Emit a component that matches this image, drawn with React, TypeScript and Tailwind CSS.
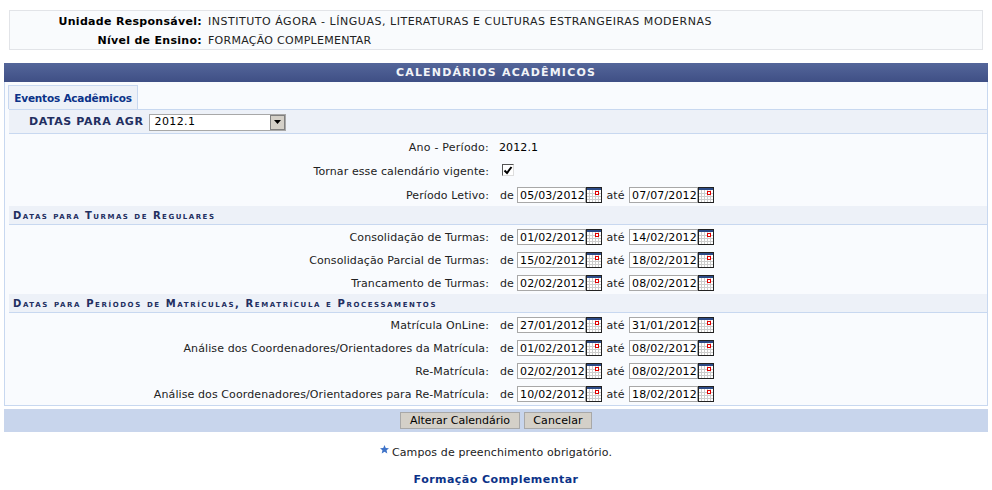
const font = "font-['DejaVu_Sans','Liberation_Sans',sans-serif]"

function CalendarIcon() {
  return (
    <svg width="16" height="16" viewBox="0 0 16 16" className="shrink-0" aria-hidden="true" shapeRendering="crispEdges">
      <rect x="0.5" y="0.5" width="15" height="15" fill="#fff" stroke="#222" />
      <rect x="1" y="1" width="14" height="2" fill="#2c4a86" />
      <path d="M3.5 3v12M6.5 3v12M9.5 3v12M12.5 3v12M1 6.5h14M1 9.5h14M1 12.5h14" stroke="#ccc" fill="none" />
      <rect x="9.5" y="4.5" width="3" height="3" fill="#fff" stroke="#e00000" />
    </svg>
  )
}

function DateInput({ value }: { value: string }) {
  return (
    <span className="flex h-[16px] w-[69px] items-center border border-[#a8a8a8] bg-white pl-[2px] text-[11px] leading-none tracking-[0.15px] text-black">
      {value}
    </span>
  )
}

function DateRange({ from, to }: { from: string; to: string }) {
  return (
    <div className="flex items-center">
      <span className="w-[18px] pl-[1px] pt-[2px]">de</span>
      <DateInput value={from} />
      <CalendarIcon />
      <span className="w-[27px] pt-[2px] text-center">até</span>
      <DateInput value={to} />
      <CalendarIcon />
    </div>
  )
}

function Row({ label, from, to }: { label: string; from: string; to: string }) {
  return (
    <div className="flex h-[23px] items-center pt-[1px]">
      <div className="w-[480px] pt-[2px] text-right">{label}</div>
      <div className="ml-[10px]">
        <DateRange from={from} to={to} />
      </div>
    </div>
  )
}

function SectionTitle({ title, wide }: { title: string; wide?: boolean }) {
  return (
    <div className={`flex h-[19px] items-center border-b border-[#c8d8f0] bg-[#edf1f8] pl-[4px] pt-[1px] text-[10px] font-bold text-[#222e60] [font-variant:small-caps] ${wide ? 'tracking-[1.6px]' : 'tracking-[1.5px]'}`}>
      {title}
    </div>
  )
}

export default function App() {
  return (
    <div className={`${font} h-[490px] w-[992px] overflow-hidden bg-white text-[11px] tracking-[0.1px] text-[#222]`}>
      <div className="mx-[9px] mt-[10px] h-[40px] border border-[#e2e4e8] bg-[#f9fbfd] pt-[2px]">
        <div className="flex h-[19px] items-center">
          <div className="w-[192px] text-right font-bold tracking-[0.3px] text-black">Unidade Responsável:</div>
          <div className="ml-[6px] tracking-[0.52px]">INSTITUTO ÁGORA - LÍNGUAS, LITERATURAS E CULTURAS ESTRANGEIRAS MODERNAS</div>
        </div>
        <div className="flex h-[19px] items-center">
          <div className="w-[192px] text-right font-bold tracking-[0.3px] text-black">Nível de Ensino:</div>
          <div className="ml-[6px] tracking-[0.27px]">FORMAÇÃO COMPLEMENTAR</div>
        </div>
      </div>

      <div className="mx-[4px] mt-[13px] w-[984px]">
        <div className="flex h-[19px] items-center justify-center bg-gradient-to-b from-[#54669a] to-[#3f4f85] pt-[2px] text-[11px] font-bold tracking-[1.2px] text-[#f2f4f8]">
          CALENDÁRIOS ACADÊMICOS
        </div>

        <div className="border-x border-b border-[#c8d8f0] bg-[#f9fbfe] pl-[4px] pr-0">
          <div className="flex h-[27px] items-end">
            <div className="ml-[-1px] flex h-[24px] w-[130px] items-center justify-center border border-b-0 border-[#c8d8f0] bg-[#edf1f8] pt-[2px] text-[10.5px] font-bold tracking-[-0.2px] text-[#0b3288]">
              Eventos Acadêmicos
            </div>
          </div>
          <div className="flex h-[25px] items-center border-y border-[#c8d8f0] bg-[#edf1f8] pl-[20px] pt-[1px]">
            <span className="pt-[1px] text-[11px] font-bold tracking-[0.6px] text-[#222e60]">DATAS PARA AGR</span>
            <div className="ml-[5px] flex h-[17px] w-[137px] items-center justify-between border border-[#a8a8a8] bg-white pl-[5px] text-[11px] tracking-[0.4px] text-black">
              <span>2012.1</span>
              <span className="flex h-[15px] w-[15px] items-center justify-center border border-[#808080] bg-[#d4d0c8]">
                <svg width="7" height="4" viewBox="0 0 7 4" aria-hidden="true">
                  <path d="M0 0h7L3.5 4z" fill="#000" />
                </svg>
              </span>
            </div>
          </div>

          <div className="pt-[1px]">
            <div className="flex h-[24px] items-center">
              <div className="w-[480px] pt-[2px] text-right tracking-[0.24px]">Ano - Período:</div>
              <div className="ml-[10px] pt-[2px] text-black">2012.1</div>
            </div>
            <div className="flex h-[24px] items-center">
              <div className="w-[480px] pt-[2px] text-right">Tornar esse calendário vigente:</div>
              <div className="mb-[2px] ml-[13px] flex h-[12px] w-[12px] items-center justify-center border border-t-[#555] border-l-[#555] border-r-[#ddd] border-b-[#ddd] bg-white">
                <svg width="10" height="9" viewBox="0 0 10 9" aria-hidden="true">
                  <path d="M1.5 4.5 L4 7 L8.5 1" stroke="#000" strokeWidth="2" fill="none" />
                </svg>
              </div>
            </div>
            <div className="flex h-[23px] items-center pt-[1px]">
              <div className="w-[480px] pt-[2px] text-right">Período Letivo:</div>
              <div className="ml-[10px]">
                <DateRange from="05/03/2012" to="07/07/2012" />
              </div>
            </div>
          </div>

          <SectionTitle title="Datas para Turmas de Regulares" />
          <Row label="Consolidação de Turmas:" from="01/02/2012" to="14/02/2012" />
          <Row label="Consolidação Parcial de Turmas:" from="15/02/2012" to="18/02/2012" />
          <Row label="Trancamento de Turmas:" from="02/02/2012" to="08/02/2012" />
          <SectionTitle wide title="Datas para Períodos de Matrículas, Rematrícula e Processamentos" />
          <Row label="Matrícula OnLine:" from="27/01/2012" to="31/01/2012" />
          <Row label="Análise dos Coordenadores/Orientadores da Matrícula:" from="01/02/2012" to="08/02/2012" />
          <Row label="Re-Matrícula:" from="02/02/2012" to="08/02/2012" />
          <Row label="Análise dos Coordenadores/Orientadores para Re-Matrícula:" from="10/02/2012" to="18/02/2012" />
        </div>

        <div className="mt-[3px] flex h-[23px] items-center justify-center gap-[4px] bg-[#c8d5ec]">
          <button type="button" className="h-[17px] w-[120px] border border-[#a8a8a8] bg-[#d4d0c8] text-[11px] leading-none tracking-[0px] text-black">
            Alterar Calendário
          </button>
          <button type="button" className="h-[17px] w-[68px] border border-[#a8a8a8] bg-[#d4d0c8] text-[11px] leading-none tracking-[0.1px] text-black">
            Cancelar
          </button>
        </div>
      </div>

      <div className="mt-[12px] flex h-[16px] items-center justify-center">
        <svg width="9" height="9" viewBox="0 0 10 10" className="mb-[6px] mr-[3px]" aria-hidden="true">
          <path d="M5 0l1.4 3.3 3.6.3-2.7 2.3.8 3.6L5 7.6 1.9 9.5l.8-3.6L0 3.6l3.6-.3z" fill="#3f73c8" />
        </svg>
        <span className="pt-[2px] tracking-[0.12px]">Campos de preenchimento obrigatório.</span>
      </div>
      <div className="mt-[11px] pt-[1px] text-center text-[11px] font-bold tracking-[0.45px] text-[#0b3288]">Formação Complementar</div>
    </div>
  )
}
